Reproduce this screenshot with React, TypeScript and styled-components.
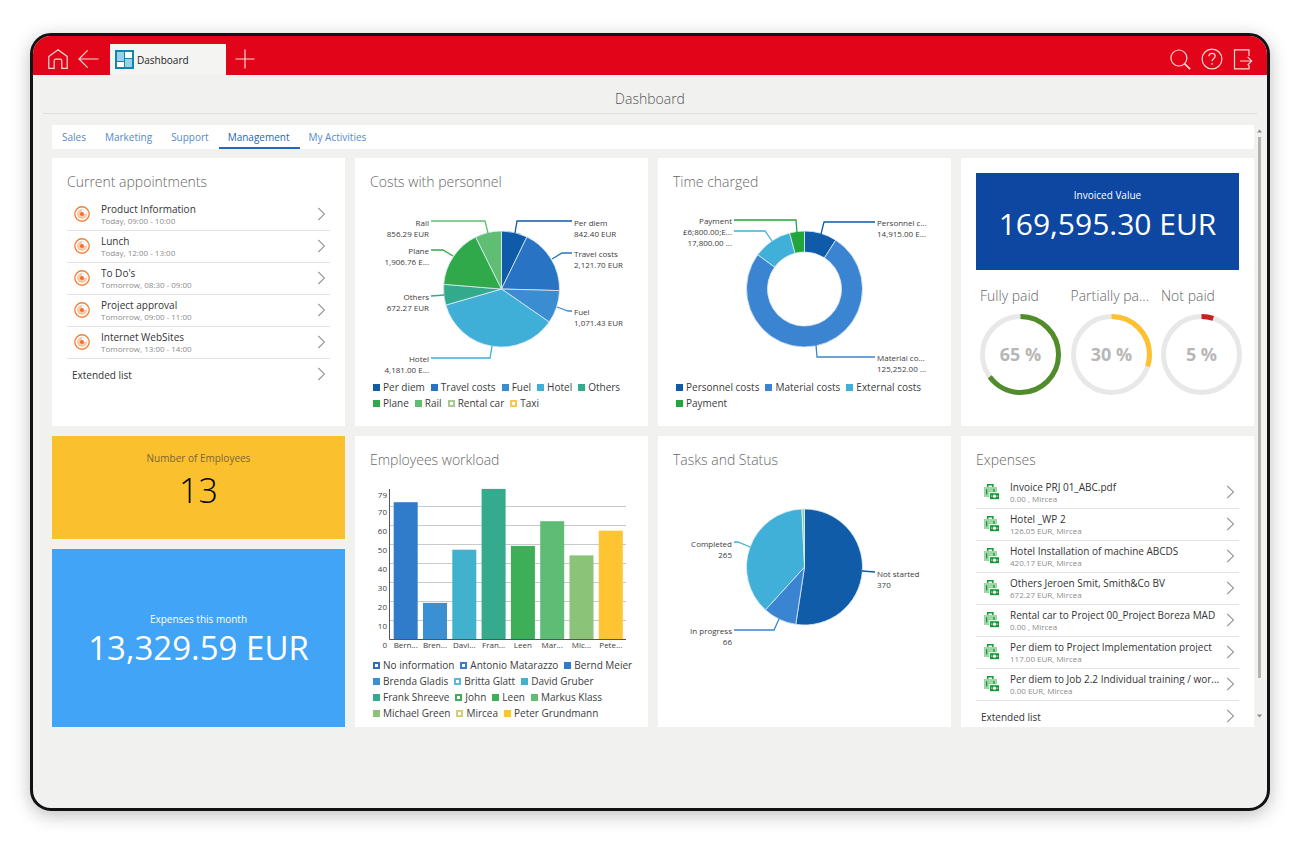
import React from "react";
import styled, { createGlobalStyle, css } from "styled-components";

const FONT = `"Open Sans", "Noto Sans", "Segoe UI", sans-serif`;

const GlobalStyle = createGlobalStyle`
  *, *::before, *::after { box-sizing: border-box; }
  body { margin: 0; background: #fff; font-family: ${FONT}; color: #333; }
  ul { list-style: none; margin: 0; padding: 0; }
  h1, h2, h3, p { margin: 0; font-weight: 400; }
  a { color: inherit; text-decoration: none; }
  button { font: inherit; border: 0; background: none; padding: 0; cursor: pointer; }
`;

/* ---------- shell ---------- */

const Page = styled.div`
  min-height: 100vh;
  padding: 33px 30px 34px;
  display: flex;
`;

const Frame = styled.div`
  flex: 1;
  min-width: 0;
  display: flex;
  flex-direction: column;
  border: 3px solid #111214;
  border-radius: 21px;
  background: #f1f1f0;
  overflow: hidden;
  box-shadow: 0 4px 18px rgba(0, 0, 0, 0.26);
`;

const TopBar = styled.header`
  height: 39px;
  padding: 0 9px;
  display: flex;
  align-items: flex-end;
  background: #e20519;
`;

const IconButton = styled.button`
  width: 31px;
  height: 32px;
  display: flex;
  align-items: center;
  justify-content: center;
  color: #fbd9d3;
`;

const BackButton = styled(IconButton)`
  margin-right: 6px;
`;

const AddButton = styled(IconButton)`
  margin-left: 3px;
`;

const PageTab = styled.a`
  width: 116px;
  height: 31px;
  padding-left: 5px;
  display: flex;
  align-items: center;
  gap: 3px;
  background: #f4f4f3;
  color: #222;
  font-size: 10px;
  line-height: 14px;
`;

const Spacer = styled.div`
  flex: 1;
`;

const TitleBar = styled.div`
  margin: 0 10px;
  padding: 14px 0 4px;
  border-bottom: 1px solid #dededf;
  text-align: center;
`;

const PageTitle = styled.h1`
  font-size: 14px;
  line-height: 20px;
  color: #555;
  && { font-weight: 300; }
`;

const Content = styled.div`
  display: flex;
  padding: 11px 2px 0 19px;
`;

const Main = styled.main`
  flex: 1;
  min-width: 0;
`;

const Nav = styled.nav`
  height: 24px;
  margin-bottom: 9px;
  padding-left: 1px;
  display: flex;
  background: #fff;
`;

const NavLink = styled.a<{ $active?: boolean }>`
  padding: 0 10px 0 9px;
  font-size: 10px;
  line-height: 24px;
  color: #5489cb;
  ${(p) =>
    p.$active &&
    css`
      color: #2468bd;
      box-shadow: inset 0 -2px 0 #2468bd;
    `}
`;

const Scrollbar = styled.div`
  width: 11px;
  display: flex;
  flex-direction: column;
  align-items: center;
  padding: 4px 0 9px;
`;

const Thumb = styled.div`
  width: 3px;
  flex: 1;
  margin: 4px 0 36px;
  background: #b4b4b4;
`;

const Grid = styled.div`
  display: grid;
  grid-template-columns: repeat(4, minmax(0, 1fr));
  grid-template-rows: 268px 291px;
  gap: 10px;
`;

const Card = styled.section`
  min-width: 0;
  background: #fff;
  overflow: hidden;
  padding-top: 14px;
`;

const CardTitle = styled.h2`
  padding: 0 15px;
  font-size: 14px;
  line-height: 20px;
  color: #686868;
  && { font-weight: 300; }
`;

/* ---------- lists ---------- */

const List = styled.ul`
  && { padding: 7px 15px 0; }
`;

const Row = styled.li`
  & + & { border-top: 1px solid #e2e2e2; }
`;

const RowLink = styled.a`
  height: 31px;
  padding: 0 4px 0 5px;
  display: flex;
  align-items: center;
`;

const RowIcon = styled.span`
  width: 29px;
  flex: none;
  display: flex;
  padding: 0 0 2px 2px;
`;

const RowArrow = styled.span`
  flex: none;
  display: flex;
  padding-bottom: 2px;
`;

const RowText = styled.span`
  flex: 1;
  min-width: 0;
  padding-right: 4px;
  display: flex;
  flex-direction: column;
`;

const RowName = styled.span`
  font-size: 10px;
  line-height: 12px;
  color: #333;
  white-space: nowrap;
  overflow: hidden;
  text-overflow: ellipsis;
`;

const RowSub = styled.span`
  font-size: 8px;
  line-height: 11px;
  color: #8c8c8c;
`;

/* ---------- charts ---------- */

const ChartSvg = styled.svg`
  display: block;
  width: 100%;
  height: 170px;
  margin-top: 14px;
  font-family: ${FONT};
  font-size: 8px;
  fill: #3c3c3c;
`;

const Legend = styled.ul`
  && { padding: 3px 4px 0 18px; }
  display: flex;
  flex-wrap: wrap;
  column-gap: 6px;
`;

const LegendItem = styled.li`
  display: flex;
  align-items: center;
  gap: 3px;
  font-size: 10px;
  line-height: 16px;
  color: #3c3c3c;
  white-space: nowrap;
`;

const Swatch = styled.span<{ $color: string; $hollow?: boolean }>`
  width: 7px;
  height: 7px;
  border: ${(p) => (p.$hollow ? 2 : 1)}px solid ${(p) => p.$color};
  background: ${(p) => (p.$hollow ? "#fff" : p.$color)};
`;

/* ---------- tiles ---------- */

const TileStack = styled.div`
  display: grid;
  grid-template-rows: 103px 1fr;
  gap: 10px;
`;

const Tile = styled.section<{ $bg: string; $ink: string; $top: number }>`
  padding-top: ${(p) => p.$top}px;
  display: flex;
  flex-direction: column;
  align-items: center;
  background: ${(p) => p.$bg};
  color: ${(p) => p.$ink};
`;

const InvoiceTile = styled(Tile)`
  height: 97px;
  margin: 0 15px;
`;

const TileLabel = styled.h2<{ $muted?: boolean }>`
  font-size: 10px;
  line-height: 14px;
  color: ${(p) => (p.$muted ? "#7a6536" : "inherit")};
`;

const TileValue = styled.p<{ $size: number; $light?: boolean }>`
  font-size: ${(p) => p.$size}px;
  line-height: ${(p) => (p.$light ? 50 : 44)}px;
  white-space: nowrap;
  && { font-weight: ${(p) => (p.$light ? 300 : 400)}; }
`;

const InvoiceCard = styled(Card)`
  padding-top: 15px;
`;

const Gauges = styled.div`
  display: grid;
  grid-template-columns: repeat(3, 81px);
  justify-content: space-between;
  margin: 16px 12px 0 19px;
`;

const GaugeLabel = styled.h3`
  font-size: 14px;
  line-height: 20px;
  color: #686868;
  white-space: nowrap;
  && { font-weight: 300; }
`;

const GaugeSvg = styled.svg`
  display: block;
  width: 81px;
  height: 81px;
  margin-top: 8px;
  font-family: ${FONT};
  font-size: 18px;
  font-weight: 700;
  fill: #b7b7b7;
`;

/* ---------- icons ---------- */

const line = { fill: "none", stroke: "currentColor", strokeWidth: 1.2 } as const;

const HomeIcon = () => (
  <svg width="20" height="20" viewBox="0 0 20 20" {...line} aria-hidden="true">
    <path d="M.8 7.4 10 .8l9.2 6.6v11.9h-5.4v-7.5c0-1.2-.6-1.7-1.7-1.7H8c-1.2 0-1.8.5-1.8 1.7v7.5H.8z" />
  </svg>
);

const BackIcon = () => (
  <svg width="21" height="20" viewBox="0 0 21 20" {...line} aria-hidden="true">
    <path d="M20.5 10H1M9.6 1.4 1 10l8.6 8.6" />
  </svg>
);

const PlusIcon = () => (
  <svg width="20" height="20" viewBox="0 0 20 20" {...line} aria-hidden="true">
    <path d="M10 .5v19M.5 10h19" />
  </svg>
);

const SearchIcon = () => (
  <svg width="21" height="21" viewBox="0 0 21 21" {...line} aria-hidden="true">
    <circle cx="8.9" cy="9" r="8" />
    <path d="m14.5 14.6 5.6 5.5" strokeWidth="1.7" />
  </svg>
);

const HelpIcon = () => (
  <svg width="22" height="22" viewBox="0 0 22 22" {...line} aria-hidden="true">
    <circle cx="11" cy="11" r="9.9" />
    <path d="M7.9 8.3c0-2 1.3-3 3.1-3s3.2 1 3.2 2.8c0 2.4-3.1 2.5-3.1 5.2M11.1 15v1.7" />
  </svg>
);

const ExitIcon = () => (
  <svg width="20" height="21" viewBox="0 0 20 21" {...line} aria-hidden="true">
    <path d="M16 7V.9H1.5v19H16V16M7 12h11.6M14.6 7.9l4.1 4.1-4.1 4.1" />
  </svg>
);

const DashboardIcon = () => (
  <svg width="19" height="19" viewBox="0 0 19 19" aria-hidden="true">
    <path fill="#0f86b0" d="M0 0h19v19H0z" />
    <path fill="#97d3e6" d="M2 2h7v9H2zM10 9h7v8h-7z" />
    <path fill="#fff" d="M10 2h7v6h-7zM2 12h7v5H2z" />
  </svg>
);

const AppointmentIcon = () => (
  <svg width="16" height="16" viewBox="0 0 16 16" aria-hidden="true">
    <circle cx="8" cy="8" r="7.2" fill="#fff" stroke="#f5813f" strokeWidth="1.4" />
    <path d="M8 8V3a5 5 0 1 0 5 5z" fill="#fcc9a8" />
    <path d="M8 3.4A4.6 4.6 0 0 1 12.6 8" fill="none" stroke="#fbe0d0" strokeWidth=".8" />
    <circle cx="8" cy="8" r="2" fill="#f36f21" />
  </svg>
);

const ExpenseIcon = () => (
  <svg width="16" height="17" viewBox="0 0 16 17" aria-hidden="true">
    <path d="M1 4h13v10H1z" fill="#9bd8a8" />
    <path d="M4.7 4V1.8h5.2V4" fill="none" stroke="#169a35" strokeWidth="1.5" />
    <path d="M3.6 6.2v5M11 6v3" stroke="#169a35" strokeWidth="1.3" />
    <path d="M6.3 9.3H16V17H6.3z" fill="#fff" />
    <path d="M7 10.2h9v6H7z" fill="#169a35" />
    <circle cx="11.5" cy="13.2" r="1.6" fill="#fff" />
    <path d="M8.2 12.6h1v1.2h-1zM13.8 12.6h1v1.2h-1z" fill="#d6f0dc" />
  </svg>
);

const Chevron = () => (
  <RowArrow>
    <svg width="9" height="14" viewBox="0 0 9 14" fill="none" stroke="#999" strokeWidth="1.1" aria-hidden="true">
      <path d="m1.3 1 6.2 6-6.2 6" />
    </svg>
  </RowArrow>
);

const ScrollArrow = ({ down }: { down?: boolean }) => (
  <svg width="5" height="4" viewBox="0 0 5 4" fill="#8a8a8a" aria-hidden="true">
    <path d={down ? "M0 .5h5L2.5 3.5z" : "M0 3.5h5L2.5.5z"} />
  </svg>
);

/* ---------- chart components ---------- */

type Callout = {
  side: "left" | "right";
  y: number;
  lines: string[];
  path: string;
};

type Slice = { name: string; value: number; color: string; callout?: Callout };

const CX = 146.5;
const CY = 83;
const R = 58;

const point = (r: number, t: number) => {
  const a = t * Math.PI * 2;
  return `${(CX + r * Math.sin(a)).toFixed(2)} ${(CY - r * Math.cos(a)).toFixed(2)}`;
};

const slicePath = (from: number, to: number, inner: number) => {
  const large = to - from > 0.5 ? 1 : 0;
  return inner
    ? `M${point(R, from)}A${R} ${R} 0 ${large} 1 ${point(R, to)}L${point(inner, to)}A${inner} ${inner} 0 ${large} 0 ${point(inner, from)}Z`
    : `M${CX} ${CY}L${point(R, from)}A${R} ${R} 0 ${large} 1 ${point(R, to)}Z`;
};

function PieChart({ title, slices, inner = 0 }: { title: string; slices: Slice[]; inner?: number }) {
  const total = slices.reduce((sum, s) => sum + s.value, 0);
  let at = 0;
  return (
    <ChartSvg viewBox="0 0 293 170" role="img" aria-label={title}>
      {slices.map((s) => {
        const from = at;
        at += s.value / total;
        return (
          <path key={s.name} d={slicePath(from, at, inner)} fill={s.color} stroke="#dcebf7" strokeWidth="0.8" />
        );
      })}
      {slices.map(({ name, color, callout }) =>
        callout ? (
          <g key={name}>
            <path d={callout.path} fill="none" stroke={color} strokeWidth="1.3" />
            {callout.lines.map((text, i) => (
              <text
                key={text}
                x={callout.side === "left" ? 74 : 219}
                y={callout.y + i * 11}
                textAnchor={callout.side === "left" ? "end" : "start"}
              >
                {text}
              </text>
            ))}
          </g>
        ) : null
      )}
    </ChartSvg>
  );
}

type LegendEntry = [name: string, color: string, hollow?: boolean];

const ChartLegend = ({ items }: { items: LegendEntry[] }) => (
  <Legend>
    {items.map(([name, color, hollow]) => (
      <LegendItem key={name}>
        <Swatch $color={color} $hollow={hollow} />
        {name}
      </LegendItem>
    ))}
  </Legend>
);

const AXIS_X = 35;
const BASE_Y = 155;
const UNIT = 1.9;

function BarChart({ bars }: { bars: { name: string; value: number; color: string }[] }) {
  const ticks = [0, 10, 20, 30, 40, 50, 60, 70, 79];
  return (
    <ChartSvg viewBox="0 0 293 170" role="img" aria-label="Employees workload">
      {ticks.map((t) => (
        <g key={t}>
          {t > 0 && t < 79 && (
            <path d={`M${AXIS_X} ${Math.round(BASE_Y - t * UNIT) + 0.5}H271`} stroke="#c9c9c9" />
          )}
          <text x="32" y={BASE_Y - t * UNIT + 9} textAnchor="end">{t}</text>
        </g>
      ))}
      {bars.map((b, i) => {
        const x = 38.7 + i * 29.3;
        return (
          <g key={b.name}>
            <rect x={x} y={BASE_Y - b.value * UNIT} width="24" height={b.value * UNIT} fill={b.color} />
            <text x={x + 12} y={BASE_Y + 9} textAnchor="middle">{b.name}</text>
          </g>
        );
      })}
      <path d={`M${AXIS_X - 0.5} 5V${BASE_Y + 0.5}H271`} fill="none" stroke="#555" />
    </ChartSvg>
  );
}

function Gauge({ label, percent, color }: { label: string; percent: number; color: string }) {
  return (
    <div>
      <GaugeLabel>{label}</GaugeLabel>
      <GaugeSvg viewBox="0 0 81 81" role="img" aria-label={`${label} ${percent} %`}>
        <circle cx="40.5" cy="40.5" r="38" fill="none" stroke="#e8e8e8" strokeWidth="5" />
        <circle
          cx="40.5"
          cy="40.5"
          r="38"
          fill="none"
          stroke={color}
          strokeWidth="5"
          pathLength="100"
          strokeDasharray={`${percent} 100`}
          transform="rotate(-90 40.5 40.5)"
        />
        <text x="40.5" y="47" textAnchor="middle">{percent} %</text>
      </GaugeSvg>
    </div>
  );
}

function ItemList({ items, icon }: { items: [string, string][]; icon: React.ReactNode }) {
  return (
    <List>
      {items.map(([name, sub]) => (
        <Row key={name}>
          <RowLink href="#">
            <RowIcon>{icon}</RowIcon>
            <RowText>
              <RowName>{name}</RowName>
              <RowSub>{sub}</RowSub>
            </RowText>
            <Chevron />
          </RowLink>
        </Row>
      ))}
      <Row>
        <RowLink href="#">
          <RowText>
            <RowName>Extended list</RowName>
          </RowText>
          <Chevron />
        </RowLink>
      </Row>
    </List>
  );
}

/* ---------- data ---------- */

const appointments: [string, string][] = [
  ["Product Information", "Today, 09:00 - 10:00"],
  ["Lunch", "Today, 12:00 - 13:00"],
  ["To Do's", "Tomorrow, 08:30 - 09:00"],
  ["Project approval", "Tomorrow, 09:00 - 11:00"],
  ["Internet WebSites", "Tomorrow, 13:00 - 14:00"],
];

const expenses: [string, string][] = [
  ["Invoice PRJ 01_ABC.pdf", "0.00 , Mircea"],
  ["Hotel _WP 2", "126.05 EUR, Mircea"],
  ["Hotel Installation of machine ABCDS", "420.17 EUR, Mircea"],
  ["Others Jeroen Smit, Smith&Co BV", "672.27 EUR, Mircea"],
  ["Rental car to Project 00_Project Boreza MAD", "0.00 , Mircea"],
  ["Per diem to Project Implementation project", "117.00 EUR, Mircea"],
  ["Per diem to Job 2.2 Individual training / wor...", "0.00 EUR, Mircea"],
];

const costs: Slice[] = [
  { name: "Per diem", value: 842.4, color: "#0f5aa9", callout: { side: "right", y: 20, lines: ["Per diem", "842.40 EUR"], path: "M217 15H162L160 27" } },
  { name: "Travel costs", value: 2121.7, color: "#2873c3", callout: { side: "right", y: 51, lines: ["Travel costs", "2,121.70 EUR"], path: "M217 47H207L197 53" } },
  { name: "Fuel", value: 1071.43, color: "#3b8dd2", callout: { side: "right", y: 109, lines: ["Fuel", "1,071.43 EUR"], path: "M217 105H213L202 101" } },
  { name: "Hotel", value: 4181, color: "#3fafd8", callout: { side: "left", y: 156, lines: ["Hotel", "4,181.00 E..."], path: "M76 152H135L137 140" } },
  { name: "Others", value: 672.27, color: "#34aa8c", callout: { side: "left", y: 94, lines: ["Others", "672.27 EUR"], path: "M76 90L89 89" } },
  { name: "Plane", value: 1906.76, color: "#2fa94a", callout: { side: "left", y: 48, lines: ["Plane", "1,906.76 E..."], path: "M76 44H88L98 50" } },
  { name: "Rail", value: 856.29, color: "#5fbd74", callout: { side: "left", y: 20, lines: ["Rail", "856.29 EUR"], path: "M76 15H130L133 27" } },
];

const time: Slice[] = [
  { name: "Personnel costs", value: 14915, color: "#0f5aa9", callout: { side: "right", y: 20, lines: ["Personnel c...", "14,915.00 E..."], path: "M217 16H166L163 28" } },
  { name: "Material costs", value: 125252, color: "#3a84d1", callout: { side: "right", y: 155, lines: ["Material co...", "125,252.00 ..."], path: "M217 151H159L158 139" } },
  { name: "External costs", value: 17800, color: "#40b0d8", callout: { side: "left", y: 40, lines: ["17,800.00 ..."], path: "M76 25H107L114 35" } },
  { name: "Payment", value: 6800, color: "#22a63c", callout: { side: "left", y: 18, lines: ["Payment", "£6;800.00;E..."], path: "M76 14H138L139 27" } },
];

const tasks: Slice[] = [
  { name: "Not started", value: 370, color: "#115ca8", callout: { side: "right", y: 93, lines: ["Not started", "370"], path: "M204 87L217 88" } },
  { name: "In progress", value: 66, color: "#3a84d1", callout: { side: "left", y: 150, lines: ["In progress", "66"], path: "M76 146H116L121 135" } },
  { name: "Completed", value: 265, color: "#40b0d8", callout: { side: "left", y: 63, lines: ["Completed", "265"], path: "M76 58H80L92 63" } },
  { name: "Deferred", value: 5, color: "#8fd0a0" },
];

const workload = [
  { name: "Bern...", value: 72, color: "#307cca" },
  { name: "Bren...", value: 19, color: "#3b8fd3" },
  { name: "Davi...", value: 47, color: "#41b1ce" },
  { name: "Fran...", value: 79, color: "#35aa8c" },
  { name: "Leen", value: 49, color: "#3daf58" },
  { name: "Mar...", value: 62, color: "#5ebc75" },
  { name: "Mic...", value: 44, color: "#8bc478" },
  { name: "Pete...", value: 57, color: "#ffc431" },
];

const costLegend: LegendEntry[] = [
  ["Per diem", "#0f5aa9"],
  ["Travel costs", "#2873c3"],
  ["Fuel", "#3b8dd2"],
  ["Hotel", "#3fafd8"],
  ["Others", "#34aa8c"],
  ["Plane", "#2fa94a"],
  ["Rail", "#5fbd74"],
  ["Rental car", "#a5cb91", true],
  ["Taxi", "#f9c653", true],
];

const workloadLegend: LegendEntry[] = [
  ["No information", "#2f6fbb", true],
  ["Antonio Matarazzo", "#3a7dca", true],
  ["Bernd Meier", "#307cca"],
  ["Brenda Gladis", "#3b8fd3"],
  ["Britta Glatt", "#5cb8df", true],
  ["David Gruber", "#41b1ce"],
  ["Frank Shreeve", "#35aa8c"],
  ["John", "#3fb058", true],
  ["Leen", "#3daf58"],
  ["Markus Klass", "#5ebc75"],
  ["Michael Green", "#8bc478"],
  ["Mircea", "#d3ce78", true],
  ["Peter Grundmann", "#ffc431"],
];

const sections = ["Sales", "Marketing", "Support", "Management", "My Activities"];

export default function App() {
  return (
    <Page>
      <GlobalStyle />
      <Frame>
        <TopBar>
          <IconButton aria-label="Home"><HomeIcon /></IconButton>
          <BackButton aria-label="Back"><BackIcon /></BackButton>
          <PageTab href="#"><DashboardIcon />Dashboard</PageTab>
          <AddButton aria-label="New tab"><PlusIcon /></AddButton>
          <Spacer />
          <IconButton aria-label="Search"><SearchIcon /></IconButton>
          <IconButton aria-label="Help"><HelpIcon /></IconButton>
          <IconButton aria-label="Log out"><ExitIcon /></IconButton>
        </TopBar>
        <TitleBar>
          <PageTitle>Dashboard</PageTitle>
        </TitleBar>
        <Content>
          <Main>
            <Nav>
              {sections.map((s) => (
                <NavLink key={s} href="#" $active={s === "Management"}>{s}</NavLink>
              ))}
            </Nav>
            <Grid>
              <Card>
                <CardTitle>Current appointments</CardTitle>
                <ItemList items={appointments} icon={<AppointmentIcon />} />
              </Card>
              <Card>
                <CardTitle>Costs with personnel</CardTitle>
                <PieChart title="Costs with personnel" slices={costs} />
                <ChartLegend items={costLegend} />
              </Card>
              <Card>
                <CardTitle>Time charged</CardTitle>
                <PieChart title="Time charged" slices={time} inner={37} />
                <ChartLegend items={time.map((s): LegendEntry => [s.name, s.color])} />
              </Card>
              <InvoiceCard>
                <InvoiceTile $bg="#0d47a1" $ink="#fff" $top={15}>
                  <TileLabel>Invoiced Value</TileLabel>
                  <TileValue $size={30}>169,595.30 EUR</TileValue>
                </InvoiceTile>
                <Gauges>
                  <Gauge label="Fully paid" percent={65} color="#508c29" />
                  <Gauge label="Partially pa..." percent={30} color="#fdc02f" />
                  <Gauge label="Not paid" percent={5} color="#c62021" />
                </Gauges>
              </InvoiceCard>
              <TileStack>
                <Tile $bg="#fac02e" $ink="#000" $top={15}>
                  <TileLabel $muted>Number of Employees</TileLabel>
                  <TileValue $size={34} $light>13</TileValue>
                </Tile>
                <Tile $bg="#42a4f6" $ink="#fff" $top={63}>
                  <TileLabel>Expenses this month</TileLabel>
                  <TileValue $size={33}>13,329.59 EUR</TileValue>
                </Tile>
              </TileStack>
              <Card>
                <CardTitle>Employees workload</CardTitle>
                <BarChart bars={workload} />
                <ChartLegend items={workloadLegend} />
              </Card>
              <Card>
                <CardTitle>Tasks and Status</CardTitle>
                <PieChart title="Tasks and Status" slices={tasks} />
              </Card>
              <Card>
                <CardTitle>Expenses</CardTitle>
                <ItemList items={expenses} icon={<ExpenseIcon />} />
              </Card>
            </Grid>
          </Main>
          <Scrollbar aria-hidden="true">
            <ScrollArrow />
            <Thumb />
            <ScrollArrow down />
          </Scrollbar>
        </Content>
      </Frame>
    </Page>
  );
}
